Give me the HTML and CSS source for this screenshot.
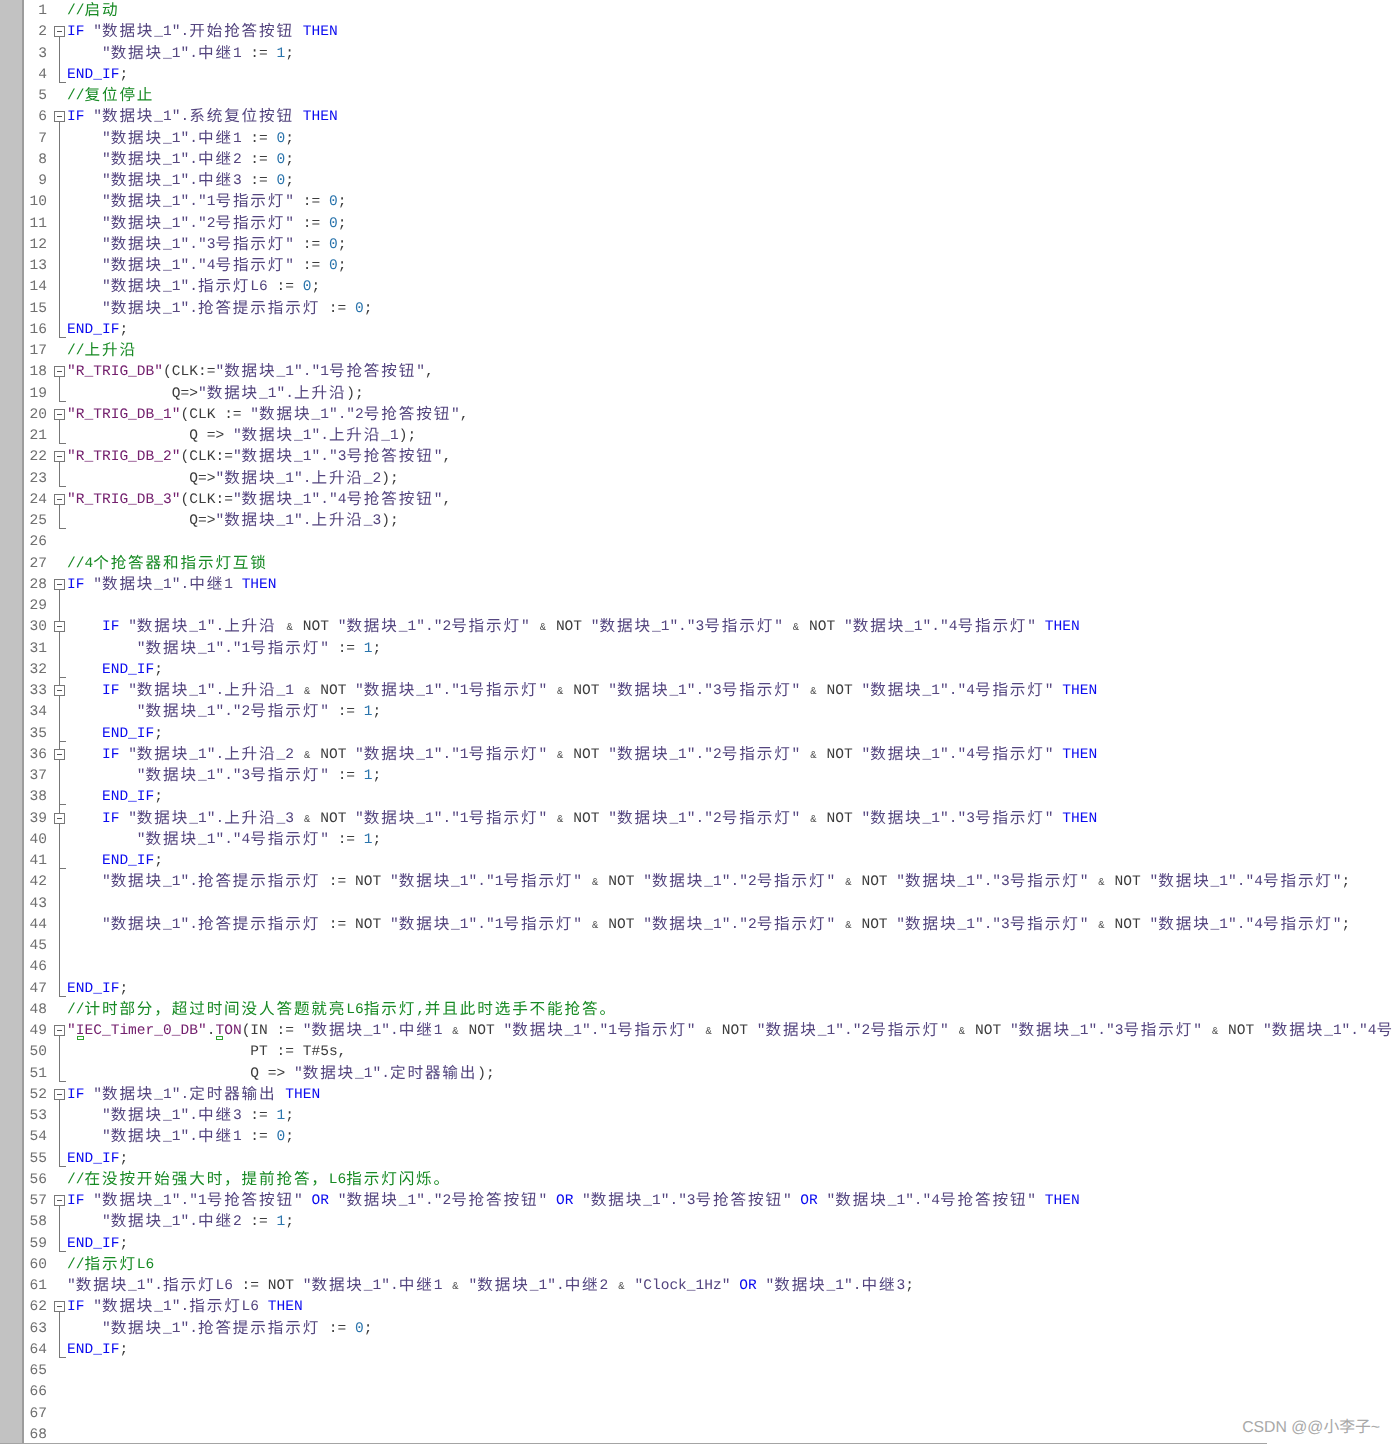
FILE: index.html
```html
<!DOCTYPE html>
<html lang="zh">
<head>
<meta charset="utf-8">
<title>SCL</title>
<link rel="stylesheet" href="styles.css">
</head>
<body>
<div class="editor">
<div class="gutter"></div>
<div class="code">
<div class="row"><span class="num">1</span><span class="fold"></span><span class="line"><span class="c">//<i>启动</i></span></span></div>
<div class="row"><span class="num">2</span><span class="fold open"></span><span class="line"><span class="k">IF</span> <span class="t">"<i>数据块</i>_1".<i>开始抢答按钮</i></span> <span class="k">THEN</span></span></div>
<div class="row"><span class="num">3</span><span class="fold bar"></span><span class="line">    <span class="t">"<i>数据块</i>_1".<i>中继</i>1</span> := <span class="n">1</span>;</span></div>
<div class="row"><span class="num">4</span><span class="fold end"></span><span class="line"><span class="k">END_IF</span>;</span></div>
<div class="row"><span class="num">5</span><span class="fold"></span><span class="line"><span class="c">//<i>复位停止</i></span></span></div>
<div class="row"><span class="num">6</span><span class="fold open"></span><span class="line"><span class="k">IF</span> <span class="t">"<i>数据块</i>_1".<i>系统复位按钮</i></span> <span class="k">THEN</span></span></div>
<div class="row"><span class="num">7</span><span class="fold bar"></span><span class="line">    <span class="t">"<i>数据块</i>_1".<i>中继</i>1</span> := <span class="n">0</span>;</span></div>
<div class="row"><span class="num">8</span><span class="fold bar"></span><span class="line">    <span class="t">"<i>数据块</i>_1".<i>中继</i>2</span> := <span class="n">0</span>;</span></div>
<div class="row"><span class="num">9</span><span class="fold bar"></span><span class="line">    <span class="t">"<i>数据块</i>_1".<i>中继</i>3</span> := <span class="n">0</span>;</span></div>
<div class="row"><span class="num">10</span><span class="fold bar"></span><span class="line">    <span class="t">"<i>数据块</i>_1"."1<i>号指示灯</i>"</span> := <span class="n">0</span>;</span></div>
<div class="row"><span class="num">11</span><span class="fold bar"></span><span class="line">    <span class="t">"<i>数据块</i>_1"."2<i>号指示灯</i>"</span> := <span class="n">0</span>;</span></div>
<div class="row"><span class="num">12</span><span class="fold bar"></span><span class="line">    <span class="t">"<i>数据块</i>_1"."3<i>号指示灯</i>"</span> := <span class="n">0</span>;</span></div>
<div class="row"><span class="num">13</span><span class="fold bar"></span><span class="line">    <span class="t">"<i>数据块</i>_1"."4<i>号指示灯</i>"</span> := <span class="n">0</span>;</span></div>
<div class="row"><span class="num">14</span><span class="fold bar"></span><span class="line">    <span class="t">"<i>数据块</i>_1".<i>指示灯</i>L6</span> := <span class="n">0</span>;</span></div>
<div class="row"><span class="num">15</span><span class="fold bar"></span><span class="line">    <span class="t">"<i>数据块</i>_1".<i>抢答提示指示灯</i></span> := <span class="n">0</span>;</span></div>
<div class="row"><span class="num">16</span><span class="fold end"></span><span class="line"><span class="k">END_IF</span>;</span></div>
<div class="row"><span class="num">17</span><span class="fold"></span><span class="line"><span class="c">//<i>上升沿</i></span></span></div>
<div class="row"><span class="num">18</span><span class="fold open"></span><span class="line"><span class="f">"R_TRIG_DB"</span>(CLK:=<span class="t">"<i>数据块</i>_1"."1<i>号抢答按钮</i>"</span>,</span></div>
<div class="row"><span class="num">19</span><span class="fold end"></span><span class="line">            Q=&gt;<span class="t">"<i>数据块</i>_1".<i>上升沿</i></span>);</span></div>
<div class="row"><span class="num">20</span><span class="fold open"></span><span class="line"><span class="f">"R_TRIG_DB_1"</span>(CLK := <span class="t">"<i>数据块</i>_1"."2<i>号抢答按钮</i>"</span>,</span></div>
<div class="row"><span class="num">21</span><span class="fold end"></span><span class="line">              Q =&gt; <span class="t">"<i>数据块</i>_1".<i>上升沿</i>_1</span>);</span></div>
<div class="row"><span class="num">22</span><span class="fold open"></span><span class="line"><span class="f">"R_TRIG_DB_2"</span>(CLK:=<span class="t">"<i>数据块</i>_1"."3<i>号抢答按钮</i>"</span>,</span></div>
<div class="row"><span class="num">23</span><span class="fold end"></span><span class="line">              Q=&gt;<span class="t">"<i>数据块</i>_1".<i>上升沿</i>_2</span>);</span></div>
<div class="row"><span class="num">24</span><span class="fold open"></span><span class="line"><span class="f">"R_TRIG_DB_3"</span>(CLK:=<span class="t">"<i>数据块</i>_1"."4<i>号抢答按钮</i>"</span>,</span></div>
<div class="row"><span class="num">25</span><span class="fold end"></span><span class="line">              Q=&gt;<span class="t">"<i>数据块</i>_1".<i>上升沿</i>_3</span>);</span></div>
<div class="row"><span class="num">26</span><span class="fold"></span><span class="line"></span></div>
<div class="row"><span class="num">27</span><span class="fold"></span><span class="line"><span class="c">//4<i>个抢答器和指示灯互锁</i></span></span></div>
<div class="row"><span class="num">28</span><span class="fold open"></span><span class="line"><span class="k">IF</span> <span class="t">"<i>数据块</i>_1".<i>中继</i>1</span> <span class="k">THEN</span></span></div>
<div class="row"><span class="num">29</span><span class="fold bar"></span><span class="line"></span></div>
<div class="row"><span class="num">30</span><span class="fold open nested"></span><span class="line">    <span class="k">IF</span> <span class="t">"<i>数据块</i>_1".<i>上升沿</i></span> <span class="a">&amp;</span> NOT <span class="t">"<i>数据块</i>_1"."2<i>号指示灯</i>"</span> <span class="a">&amp;</span> NOT <span class="t">"<i>数据块</i>_1"."3<i>号指示灯</i>"</span> <span class="a">&amp;</span> NOT <span class="t">"<i>数据块</i>_1"."4<i>号指示灯</i>"</span> <span class="k">THEN</span></span></div>
<div class="row"><span class="num">31</span><span class="fold bar"></span><span class="line">        <span class="t">"<i>数据块</i>_1"."1<i>号指示灯</i>"</span> := <span class="n">1</span>;</span></div>
<div class="row"><span class="num">32</span><span class="fold bar tick"></span><span class="line">    <span class="k">END_IF</span>;</span></div>
<div class="row"><span class="num">33</span><span class="fold open nested"></span><span class="line">    <span class="k">IF</span> <span class="t">"<i>数据块</i>_1".<i>上升沿</i>_1</span> <span class="a">&amp;</span> NOT <span class="t">"<i>数据块</i>_1"."1<i>号指示灯</i>"</span> <span class="a">&amp;</span> NOT <span class="t">"<i>数据块</i>_1"."3<i>号指示灯</i>"</span> <span class="a">&amp;</span> NOT <span class="t">"<i>数据块</i>_1"."4<i>号指示灯</i>"</span> <span class="k">THEN</span></span></div>
<div class="row"><span class="num">34</span><span class="fold bar"></span><span class="line">        <span class="t">"<i>数据块</i>_1"."2<i>号指示灯</i>"</span> := <span class="n">1</span>;</span></div>
<div class="row"><span class="num">35</span><span class="fold bar tick"></span><span class="line">    <span class="k">END_IF</span>;</span></div>
<div class="row"><span class="num">36</span><span class="fold open nested"></span><span class="line">    <span class="k">IF</span> <span class="t">"<i>数据块</i>_1".<i>上升沿</i>_2</span> <span class="a">&amp;</span> NOT <span class="t">"<i>数据块</i>_1"."1<i>号指示灯</i>"</span> <span class="a">&amp;</span> NOT <span class="t">"<i>数据块</i>_1"."2<i>号指示灯</i>"</span> <span class="a">&amp;</span> NOT <span class="t">"<i>数据块</i>_1"."4<i>号指示灯</i>"</span> <span class="k">THEN</span></span></div>
<div class="row"><span class="num">37</span><span class="fold bar"></span><span class="line">        <span class="t">"<i>数据块</i>_1"."3<i>号指示灯</i>"</span> := <span class="n">1</span>;</span></div>
<div class="row"><span class="num">38</span><span class="fold bar tick"></span><span class="line">    <span class="k">END_IF</span>;</span></div>
<div class="row"><span class="num">39</span><span class="fold open nested"></span><span class="line">    <span class="k">IF</span> <span class="t">"<i>数据块</i>_1".<i>上升沿</i>_3</span> <span class="a">&amp;</span> NOT <span class="t">"<i>数据块</i>_1"."1<i>号指示灯</i>"</span> <span class="a">&amp;</span> NOT <span class="t">"<i>数据块</i>_1"."2<i>号指示灯</i>"</span> <span class="a">&amp;</span> NOT <span class="t">"<i>数据块</i>_1"."3<i>号指示灯</i>"</span> <span class="k">THEN</span></span></div>
<div class="row"><span class="num">40</span><span class="fold bar"></span><span class="line">        <span class="t">"<i>数据块</i>_1"."4<i>号指示灯</i>"</span> := <span class="n">1</span>;</span></div>
<div class="row"><span class="num">41</span><span class="fold bar tick"></span><span class="line">    <span class="k">END_IF</span>;</span></div>
<div class="row"><span class="num">42</span><span class="fold bar"></span><span class="line">    <span class="t">"<i>数据块</i>_1".<i>抢答提示指示灯</i></span> := NOT <span class="t">"<i>数据块</i>_1"."1<i>号指示灯</i>"</span> <span class="a">&amp;</span> NOT <span class="t">"<i>数据块</i>_1"."2<i>号指示灯</i>"</span> <span class="a">&amp;</span> NOT <span class="t">"<i>数据块</i>_1"."3<i>号指示灯</i>"</span> <span class="a">&amp;</span> NOT <span class="t">"<i>数据块</i>_1"."4<i>号指示灯</i>"</span>;</span></div>
<div class="row"><span class="num">43</span><span class="fold bar"></span><span class="line"></span></div>
<div class="row"><span class="num">44</span><span class="fold bar"></span><span class="line">    <span class="t">"<i>数据块</i>_1".<i>抢答提示指示灯</i></span> := NOT <span class="t">"<i>数据块</i>_1"."1<i>号指示灯</i>"</span> <span class="a">&amp;</span> NOT <span class="t">"<i>数据块</i>_1"."2<i>号指示灯</i>"</span> <span class="a">&amp;</span> NOT <span class="t">"<i>数据块</i>_1"."3<i>号指示灯</i>"</span> <span class="a">&amp;</span> NOT <span class="t">"<i>数据块</i>_1"."4<i>号指示灯</i>"</span>;</span></div>
<div class="row"><span class="num">45</span><span class="fold bar"></span><span class="line"></span></div>
<div class="row"><span class="num">46</span><span class="fold bar"></span><span class="line"></span></div>
<div class="row"><span class="num">47</span><span class="fold end"></span><span class="line"><span class="k">END_IF</span>;</span></div>
<div class="row"><span class="num">48</span><span class="fold"></span><span class="line"><span class="c">//<i>计时部分，超过时间没人答题就亮</i>L6<i>指示灯</i>,<i>并且此时选手不能抢答。</i></span></span></div>
<div class="row"><span class="num">49</span><span class="fold open"></span><span class="line"><span class="f">"<span class="mark">I</span>EC_Timer_0_DB"</span>.<span class="f"><span class="mark">T</span>ON</span>(IN := <span class="t">"<i>数据块</i>_1".<i>中继</i>1</span> <span class="a">&amp;</span> NOT <span class="t">"<i>数据块</i>_1"."1<i>号指示灯</i>"</span> <span class="a">&amp;</span> NOT <span class="t">"<i>数据块</i>_1"."2<i>号指示灯</i>"</span> <span class="a">&amp;</span> NOT <span class="t">"<i>数据块</i>_1"."3<i>号指示灯</i>"</span> <span class="a">&amp;</span> NOT <span class="t">"<i>数据块</i>_1"."4<i>号</i></span></span></div>
<div class="row"><span class="num">50</span><span class="fold bar"></span><span class="line">                     PT := T#5s,</span></div>
<div class="row"><span class="num">51</span><span class="fold end"></span><span class="line">                     Q =&gt; <span class="t">"<i>数据块</i>_1".<i>定时器输出</i></span>);</span></div>
<div class="row"><span class="num">52</span><span class="fold open"></span><span class="line"><span class="k">IF</span> <span class="t">"<i>数据块</i>_1".<i>定时器输出</i></span> <span class="k">THEN</span></span></div>
<div class="row"><span class="num">53</span><span class="fold bar"></span><span class="line">    <span class="t">"<i>数据块</i>_1".<i>中继</i>3</span> := <span class="n">1</span>;</span></div>
<div class="row"><span class="num">54</span><span class="fold bar"></span><span class="line">    <span class="t">"<i>数据块</i>_1".<i>中继</i>1</span> := <span class="n">0</span>;</span></div>
<div class="row"><span class="num">55</span><span class="fold end"></span><span class="line"><span class="k">END_IF</span>;</span></div>
<div class="row"><span class="num">56</span><span class="fold"></span><span class="line"><span class="c">//<i>在没按开始强大时，提前抢答，</i>L6<i>指示灯闪烁。</i></span></span></div>
<div class="row"><span class="num">57</span><span class="fold open"></span><span class="line"><span class="k">IF</span> <span class="t">"<i>数据块</i>_1"."1<i>号抢答按钮</i>"</span> <span class="k">OR</span> <span class="t">"<i>数据块</i>_1"."2<i>号抢答按钮</i>"</span> <span class="k">OR</span> <span class="t">"<i>数据块</i>_1"."3<i>号抢答按钮</i>"</span> <span class="k">OR</span> <span class="t">"<i>数据块</i>_1"."4<i>号抢答按钮</i>"</span> <span class="k">THEN</span></span></div>
<div class="row"><span class="num">58</span><span class="fold bar"></span><span class="line">    <span class="t">"<i>数据块</i>_1".<i>中继</i>2</span> := <span class="n">1</span>;</span></div>
<div class="row"><span class="num">59</span><span class="fold end"></span><span class="line"><span class="k">END_IF</span>;</span></div>
<div class="row"><span class="num">60</span><span class="fold"></span><span class="line"><span class="c">//<i>指示灯</i>L6</span></span></div>
<div class="row"><span class="num">61</span><span class="fold"></span><span class="line"><span class="t">"<i>数据块</i>_1".<i>指示灯</i>L6</span> := NOT <span class="t">"<i>数据块</i>_1".<i>中继</i>1</span> <span class="a">&amp;</span> <span class="t">"<i>数据块</i>_1".<i>中继</i>2</span> <span class="a">&amp;</span> <span class="t">"Clock_1Hz"</span> <span class="k">OR</span> <span class="t">"<i>数据块</i>_1".<i>中继</i>3</span>;</span></div>
<div class="row"><span class="num">62</span><span class="fold open"></span><span class="line"><span class="k">IF</span> <span class="t">"<i>数据块</i>_1".<i>指示灯</i>L6</span> <span class="k">THEN</span></span></div>
<div class="row"><span class="num">63</span><span class="fold bar"></span><span class="line">    <span class="t">"<i>数据块</i>_1".<i>抢答提示指示灯</i></span> := <span class="n">0</span>;</span></div>
<div class="row"><span class="num">64</span><span class="fold end"></span><span class="line"><span class="k">END_IF</span>;</span></div>
<div class="row"><span class="num">65</span><span class="fold"></span><span class="line"></span></div>
<div class="row"><span class="num">66</span><span class="fold"></span><span class="line"></span></div>
<div class="row"><span class="num">67</span><span class="fold"></span><span class="line"></span></div>
<div class="row"><span class="num">68</span><span class="fold"></span><span class="line"></span></div>
</div>
</div>
<div class="rule"></div>
<div class="watermark">CSDN @@小李子~</div>
</body>
</html>
```
FILE: styles.css
```css
html, body {
  margin: 0;
  height: 1444px;
  overflow: hidden;
  background: #fff;
}

body {
  position: relative;
  font-family: "Liberation Mono", "Noto Sans CJK SC", monospace;
  font-size: 14.55px;
  text-rendering: geometricPrecision;
  color: #3c3c3c;
}

.editor {
  display: flex;
  height: 1443px;
  overflow: hidden;
}

.gutter {
  flex: none;
  width: 22px;
  background: #c2c2c2;
  border-right: 2px solid #9c9c9c;
}

.code {
  flex: 1;
  min-width: 0;
  filter: blur(0.3px);
}

.row {
  display: grid;
  grid-template-columns: 23px 20px 1fr;
  align-items: start;
  height: 21.25px;
  line-height: 22.75px;
}

.num {
  text-align: right;
  color: #707070;
}

.fold {
  align-self: stretch;
  margin-left: 7px;
  box-sizing: border-box;
}

.bar,
.end {
  justify-self: start;
  margin-left: 12px;
  width: 7px;
  border-left: 1px solid #777;
}

.end {
  align-self: start;
  height: 19px;
  border-bottom: 1px solid #777;
}

.tick {
  background: linear-gradient(#777, #777) left 18px / 100% 1px no-repeat;
}

.open {
  display: flex;
  flex-direction: column;
  align-items: center;
  justify-self: start;
  width: 11px;
  padding-top: 5px;
}

.nested {
  background: linear-gradient(#777, #777) center top / 1px 5px no-repeat;
}

.open::before {
  content: "";
  flex: none;
  box-sizing: border-box;
  width: 11px;
  height: 11px;
  border: 1px solid #777;
  background: linear-gradient(#555, #555) center / 5px 1px no-repeat;
}

.open::after {
  content: "";
  flex: 1;
  width: 1px;
  background: #777;
}

.line {
  white-space: pre;
}

.line i {
  font-family: "Noto Sans CJK SC", sans-serif;
  font-style: normal;
  font-size: 15.6px;
  line-height: 0;
  letter-spacing: 1.86px;
  vertical-align: -1px;
}

.k { color: #0a0af0; }
.t { color: #54457f; }
.f { color: #74206e; }
.c { color: #178a24; }
.n { color: #2a74ac; }

.a {
  display: inline-block;
  width: 8.73px;
  font-size: 10.5px;
  text-align: center;
  line-height: 1;
  color: #555;
}

.mark {
  position: relative;
}

.mark::after {
  content: "";
  position: absolute;
  left: 1px;
  top: 13px;
  box-sizing: border-box;
  width: 7px;
  height: 4px;
  border: 1px solid #2fa02f;
}

.rule {
  width: 1267px;
  height: 1px;
  background: #a4a4a4;
}

.watermark {
  position: absolute;
  right: 16px;
  bottom: 7px;
  font-family: "Liberation Sans", "Noto Sans CJK SC", sans-serif;
  font-size: 15.8px;
  color: #a8a8a8;
}
```
